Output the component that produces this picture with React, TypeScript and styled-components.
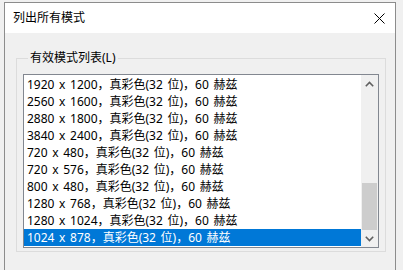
import React from "react";
import styled, { createGlobalStyle } from "styled-components";

const Global = createGlobalStyle`
  html, body { margin: 0; padding: 0; background: #f0f0f0; }
  body { font-family: "Noto Sans", "Noto Sans CJK SC", sans-serif; font-size: 12px; color: #000; }
  #root { width: 403px; height: 270px; overflow: hidden; }
`;

const Screen = styled.div`
  width: 403px;
  height: 270px;
  box-sizing: border-box;
  padding: 2px 7px 0 4px;
  background: #f0f0f0;
  display: flex;
`;

const Window = styled.div`
  flex: 1;
  display: flex;
  flex-direction: column;
  border: 1px solid #8c8c8c;
  border-bottom: none;
  background: #f0f0f0;
`;

const TitleBar = styled.div`
  height: 30px;
  background: #fff;
  display: flex;
  align-items: center;
  justify-content: space-between;
  padding: 0 6px 0 8px;
`;

const Title = styled.span`
  font-size: 12px;
  line-height: 16px;
`;

const CloseBtn = styled.div`
  width: 20px;
  height: 20px;
  display: flex;
  align-items: center;
  justify-content: center;
`;

const Body = styled.div`
  flex: 1;
  padding: 17px 9px 0 11px;
  display: flex;
  flex-direction: column;
`;

const Group = styled.fieldset`
  margin: 0;
  padding: 8px 6px 3px 6px;
  border: 1px solid #dcdcdc;
  min-width: 0;
`;

const Legend = styled.legend`
  padding: 0 2px;
  margin-left: 5px;
  font-size: 12px;
  line-height: 16px;
`;

const ListBox = styled.div`
  border: 1px solid #828790;
  background: #fff;
  height: 172px;
  display: flex;
`;

const Rows = styled.div`
  flex: 1;
  padding-top: 1px;
  display: flex;
  flex-direction: column;
`;

const Row = styled.div<{ $sel?: boolean }>`
  height: 17px;
  line-height: 17px;
  padding-left: 3px;
  white-space: pre;
  word-spacing: 1.5px;
  overflow: hidden;
  background: ${(p) => (p.$sel ? "#0078d7" : "transparent")};
  color: ${(p) => (p.$sel ? "#fff" : "#000")};
`;

const ScrollBar = styled.div`
  width: 17px;
  background: #f0f0f0;
  display: flex;
  flex-direction: column;
`;

const Arrow = styled.div`
  height: 17px;
  display: flex;
  align-items: center;
  justify-content: center;
`;

const Track = styled.div`
  flex: 1;
  display: flex;
  flex-direction: column;
  justify-content: flex-end;
`;

const Thumb = styled.div`
  height: 47px;
  margin: 0 1px;
  background: #cdcdcd;
`;

const modes = [
  "1920 x 1200，真彩色(32 位)，60 赫兹",
  "2560 x 1600，真彩色(32 位)，60 赫兹",
  "2880 x 1800，真彩色(32 位)，60 赫兹",
  "3840 x 2400，真彩色(32 位)，60 赫兹",
  "720 x 480，真彩色(32 位)，60 赫兹",
  "720 x 576，真彩色(32 位)，60 赫兹",
  "800 x 480，真彩色(32 位)，60 赫兹",
  "1280 x 768，真彩色(32 位)，60 赫兹",
  "1280 x 1024，真彩色(32 位)，60 赫兹",
  "1024 x 878，真彩色(32 位)，60 赫兹",
];

export default function App() {
  return (
    <>
      <Global />
      <Screen>
        <Window>
          <TitleBar>
            <Title>列出所有模式</Title>
            <CloseBtn>
              <svg width="11" height="11" viewBox="0 0 11 11">
                <path d="M0.5 0.5 L10.5 10.5 M10.5 0.5 L0.5 10.5" stroke="#000" strokeWidth="1" fill="none" />
              </svg>
            </CloseBtn>
          </TitleBar>
          <Body>
            <Group>
              <Legend>有效模式列表(L)</Legend>
              <ListBox>
                <Rows>
                  {modes.map((m, i) => (
                    <Row key={i} $sel={i === modes.length - 1}>
                      {m}
                    </Row>
                  ))}
                </Rows>
                <ScrollBar>
                  <Arrow>
                    <svg width="9" height="6" viewBox="0 0 9 6">
                      <path d="M0.8 5.2 L4.5 1.5 L8.2 5.2" stroke="#606060" strokeWidth="1.6" fill="none" />
                    </svg>
                  </Arrow>
                  <Track>
                    <Thumb />
                  </Track>
                  <Arrow>
                    <svg width="9" height="6" viewBox="0 0 9 6">
                      <path d="M0.8 0.8 L4.5 4.5 L8.2 0.8" stroke="#606060" strokeWidth="1.6" fill="none" />
                    </svg>
                  </Arrow>
                </ScrollBar>
              </ListBox>
            </Group>
          </Body>
        </Window>
      </Screen>
    </>
  );
}
